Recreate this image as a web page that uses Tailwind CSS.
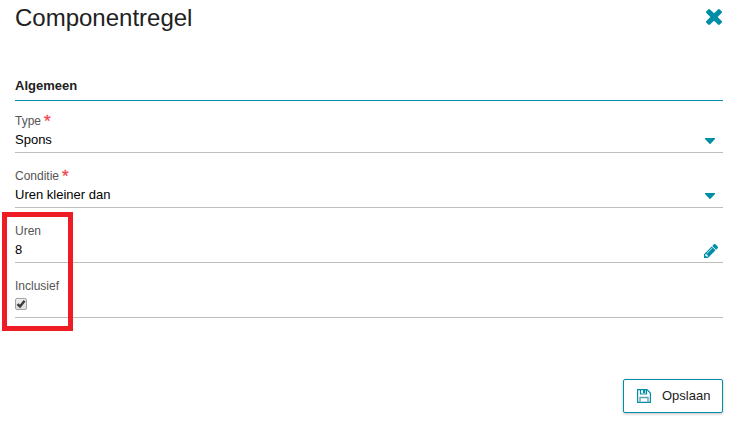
<!DOCTYPE html>
<html lang="nl">
<head>
<meta charset="utf-8">
<title>Componentregel</title>
<script src="https://cdn.jsdelivr.net/npm/@tailwindcss/browser@4"></script>
</head>
<body class="bg-white font-['Liberation_Sans',Arial,sans-serif]">
<main class="relative h-[426px] w-[741px] overflow-hidden pl-[15px] pr-[18px] text-[13px] text-black">
  <header class="flex h-[72px] items-start justify-between">
    <h1 class="pt-[4px] text-[24px] leading-[28px] text-[#212121]">Componentregel</h1>
    <button class="mt-[9px] mr-px" aria-label="Sluiten">
      <svg class="block size-[16px] fill-[#008ea6]" viewBox="302 366 1188 1188"><path d="M1490 1322q0 40-28 68l-136 136q-28 28-68 28t-68-28l-294-294-294 294q-28 28-68 28t-68-28l-136-136q-28-28-28-68t28-68l294-294-294-294q-28-28-28-68t28-68l136-136q28-28 68-28t68 28l294 294 294-294q28-28 68-28t68 28l136 136q28 28 28 68t-28 68l-294 294 294 294q28 28 28 68z"/></svg>
    </button>
  </header>
  <h2 class="h-[29px] border-b border-[#008ea6] pt-[6px] font-bold leading-[16px] text-[#212121]">Algemeen</h2>

  <div class="flex h-[52px] items-start justify-between border-b border-[#bdbdbd] pt-[12px]">
    <div>
      <div class="flex h-[19px] text-[12px] leading-[16px] text-[#555]">Type<span class="ml-[3px] pt-px text-[17px] text-[#f44350] [-webkit-text-stroke:0.3px_#f44350]">*</span></div>
      <div class="leading-[16px]">Spons</div>
    </div>
    <svg class="mt-[25px] mr-[8px] h-[6px] w-[10px] fill-[#008ea6]" viewBox="0 0 10 6"><path d="M0 0h10v1L5.500 5.700q-.5.400-1 0L0 1z"/></svg>
  </div>
  <div class="flex h-[55px] items-start justify-between border-b border-[#bdbdbd] pt-[15px]">
    <div>
      <div class="flex h-[19px] text-[12px] leading-[16px] text-[#555]">Conditie<span class="ml-[3px] pt-px text-[17px] text-[#f44350] [-webkit-text-stroke:0.3px_#f44350]">*</span></div>
      <div class="leading-[16px]">Uren kleiner dan</div>
    </div>
    <svg class="mt-[25px] mr-[8px] h-[6px] w-[10px] fill-[#008ea6]" viewBox="0 0 10 6"><path d="M0 0h10v1L5.500 5.700q-.5.400-1 0L0 1z"/></svg>
  </div>
  <div class="flex h-[55px] items-start justify-between border-b border-[#bdbdbd] pt-[15px]">
    <div>
      <div class="h-[19px] text-[12px] leading-[16px] text-[#555]">Uren</div>
      <div class="leading-[16px]">8</div>
    </div>
    <svg class="mt-[21px] mr-[5px] size-[14px] fill-[#008ea6]" viewBox="128 149 1515 1515"><path d="M491 1536l91-91-235-235-91 91v107h128v128h107zm523-928q0-22-22-22-10 0-17 7l-542 542q-7 7-7 17 0 22 22 22 10 0 17-7l542-542q7-7 7-17zm-54-192l416 416-832 832h-416v-416zm683 96q0 53-37 90l-166 166-416-416 166-165q36-38 90-38 53 0 91 38l235 234q37 39 37 91z"/></svg>
  </div>
  <div class="h-[55px] border-b border-[#bdbdbd] pt-[15px]">
    <div class="h-[20px] text-[12px] leading-[16px] text-[#555]">Inclusief</div>
    <div class="size-[12px] rounded-[2px] border border-[#a3a3a3] bg-linear-to-b from-[#eee] to-[#dcdcdc]">
      <svg class="block size-[10px]" viewBox="0 0 10 10"><path d="M1.500 5.200L4 7.500L8.600 1.800" fill="none" stroke="#3c3c3c" stroke-width="2.500"/></svg>
    </div>
  </div>

  <footer class="flex justify-end pt-[61px]">
    <button class="flex h-[34px] w-[100px] items-center rounded-[2px] border border-[#008ea6] bg-white pl-[13px] text-[#212121] shadow-[0_1px_3px_rgba(0,0,0,0.25)]">
      <svg class="size-[14px]" viewBox="0 0 14 14" fill="none" stroke="#008ea6"><path d="M.6.600h9.400l3.400 3.400v9.400H.6z" stroke-width="1.200"/><path d="M3.500.500v4.500h6V.5" stroke-width="1.200"/><path d="M3 13.500v-5h8v5" stroke="#5b9fb0" stroke-width="1.300"/><path d="M6 1h2.300v3H6z" fill="#008ea6" stroke="none"/></svg>
      <span class="ml-[11px] leading-[16px]">Opslaan</span>
    </button>
  </footer>

  <div class="pointer-events-none absolute left-[2px] top-[212px] h-[119px] w-[71px] border-[5px] border-[#ee1c24]"></div>
</main>
</body>
</html>
